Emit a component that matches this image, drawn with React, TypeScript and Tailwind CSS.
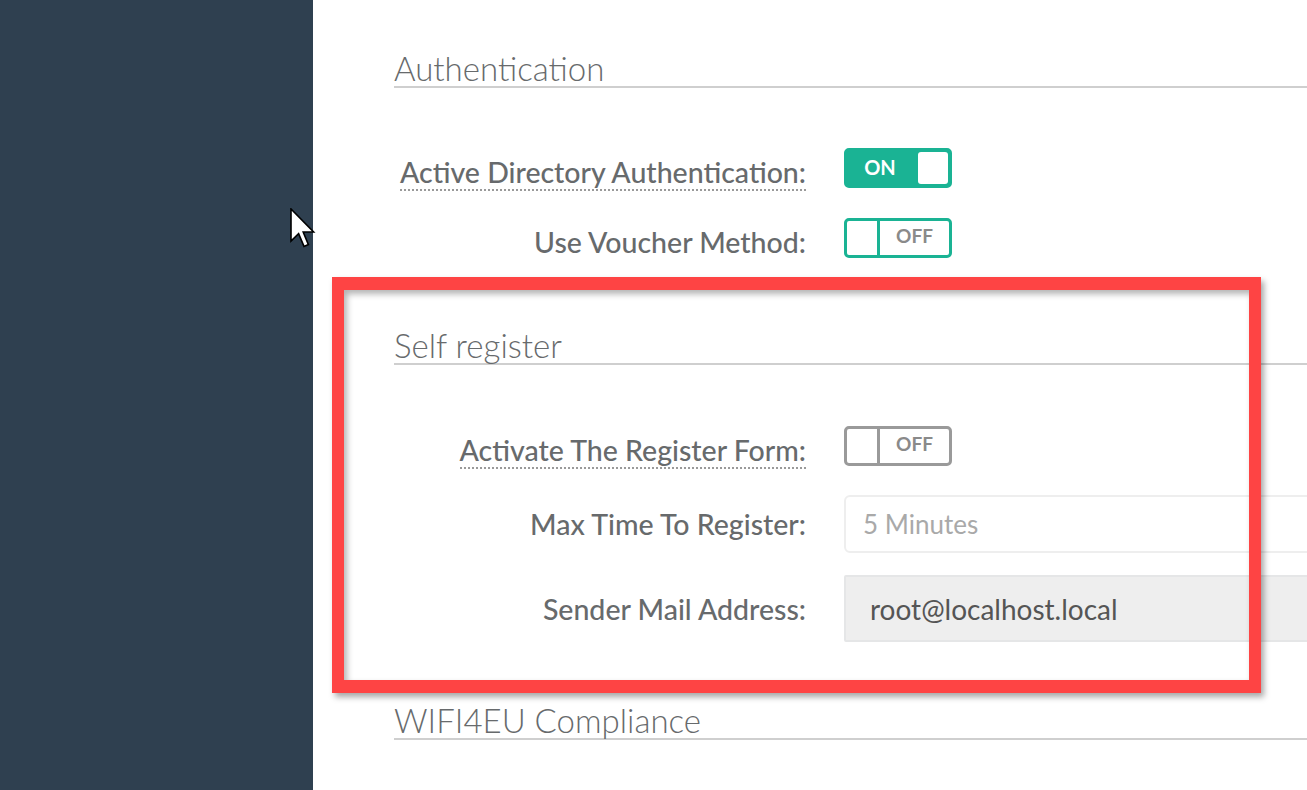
import React from "react";

function Toggle({ on, disabled }: { on: boolean; disabled?: boolean }) {
  const border = disabled ? "border-[#9a9a9a]" : "border-[#1ab394]";
  if (on) {
    return (
      <div className={`flex h-[40px] w-[108px] rounded-[5px] border-[3px] ${border} bg-[#1ab394] p-px`}>
        <span className="flex flex-1 items-center justify-center pb-[2px] pr-[6px] text-[20px] font-bold text-white">ON</span>
        <span className="w-[30px] rounded-[3px] bg-white" />
      </div>
    );
  }
  return (
    <div className={`flex h-[40px] w-[108px] rounded-[5px] border-[3px] ${border} bg-white`}>
      <span className={`w-[33px] border-r-[3px] ${border}`} />
      <span className="flex flex-1 items-center justify-center pb-[3px] text-[19px] font-bold text-[#8a8a8a]">OFF</span>
    </div>
  );
}

function Heading({ children }: { children: React.ReactNode }) {
  return (
    <div className="border-b-2 border-[#cfcfcf] text-[33px] leading-[36px] font-light text-[#676a6c]">
      {children}
    </div>
  );
}

function Label({ children, className = "" }: { children: React.ReactNode; className?: string }) {
  return (
    <div className={`w-[412px] text-right text-[28.5px] leading-[30px] font-medium text-[#676a6c] ${className}`}>
      {children}
    </div>
  );
}

function SwitchRow({
  label,
  dotted,
  children,
}: {
  label: string;
  dotted?: boolean;
  children: React.ReactNode;
}) {
  return (
    <div className="flex items-start">
      <Label className="mt-[9px]">
        <span className={dotted ? "border-b-2 border-dotted border-[#9a9a9a]" : ""}>{label}</span>
      </Label>
      <div className="ml-[38px]">{children}</div>
    </div>
  );
}

function Cursor() {
  return (
    <svg className="absolute left-[290px] top-[208px]" width="26" height="40" viewBox="0 0 13 20">
      <path
        d="M0.5 0.5 L0.5 16.5 L4.3 12.8 L7 19.2 L9.2 18.3 L6.6 12 L11.8 12 Z"
        fill="#fff"
        stroke="#000"
        strokeWidth="0.8"
      />
    </svg>
  );
}

export default function App() {
  return (
    <div
      className="relative flex h-[790px] w-[1307px] overflow-hidden bg-white"
      style={{ fontFamily: "Lato, 'Open Sans', sans-serif" }}
    >
      <aside className="h-full w-[313px] shrink-0 bg-[#2f4050]" />

      <main className="flex-1 pl-[81px] pt-[50px]">
        <Heading>Authentication</Heading>

        <div className="mt-[60px] flex flex-col gap-[30px]">
          <SwitchRow label="Active Directory Authentication:" dotted>
            <Toggle on />
          </SwitchRow>
          <SwitchRow label="Use Voucher Method:">
            <Toggle on={false} />
          </SwitchRow>
        </div>

        <div className="mt-[69px]">
          <Heading>Self register</Heading>
        </div>

        <div className="mt-[61px]">
          <SwitchRow label="Activate The Register Form:" dotted>
            <Toggle on={false} disabled />
          </SwitchRow>
        </div>

        <div className="mt-[29px] flex items-center">
          <Label>Max Time To Register:</Label>
          <div className="ml-[38px] flex h-[58px] w-[520px] shrink-0 items-center rounded-[6px] border-2 border-[#eeeeee] bg-white pl-[17px] text-[26px] text-[#a9a9a9]">
            5 Minutes
          </div>
        </div>

        <div className="mt-[22px] flex items-center">
          <Label>Sender Mail Address:</Label>
          <div className="ml-[38px] flex h-[67px] w-[520px] shrink-0 items-center rounded-[2px] border-2 border-[#e5e6e7] bg-[#eeeeee] pl-[24px] text-[28px] text-[#555]">
            root@localhost.local
          </div>
        </div>

        <div className="mt-[60px]">
          <Heading>WIFI4EU Compliance</Heading>
        </div>
      </main>

      <div className="pointer-events-none absolute left-[332px] top-[277px] h-[416px] w-[929px] border-x-[12px] border-y-[13px] border-[#fe4444] shadow-[3px_4px_6px_rgba(0,0,0,0.35),inset_3px_4px_6px_rgba(0,0,0,0.3)]" />

      <Cursor />
    </div>
  );
}
